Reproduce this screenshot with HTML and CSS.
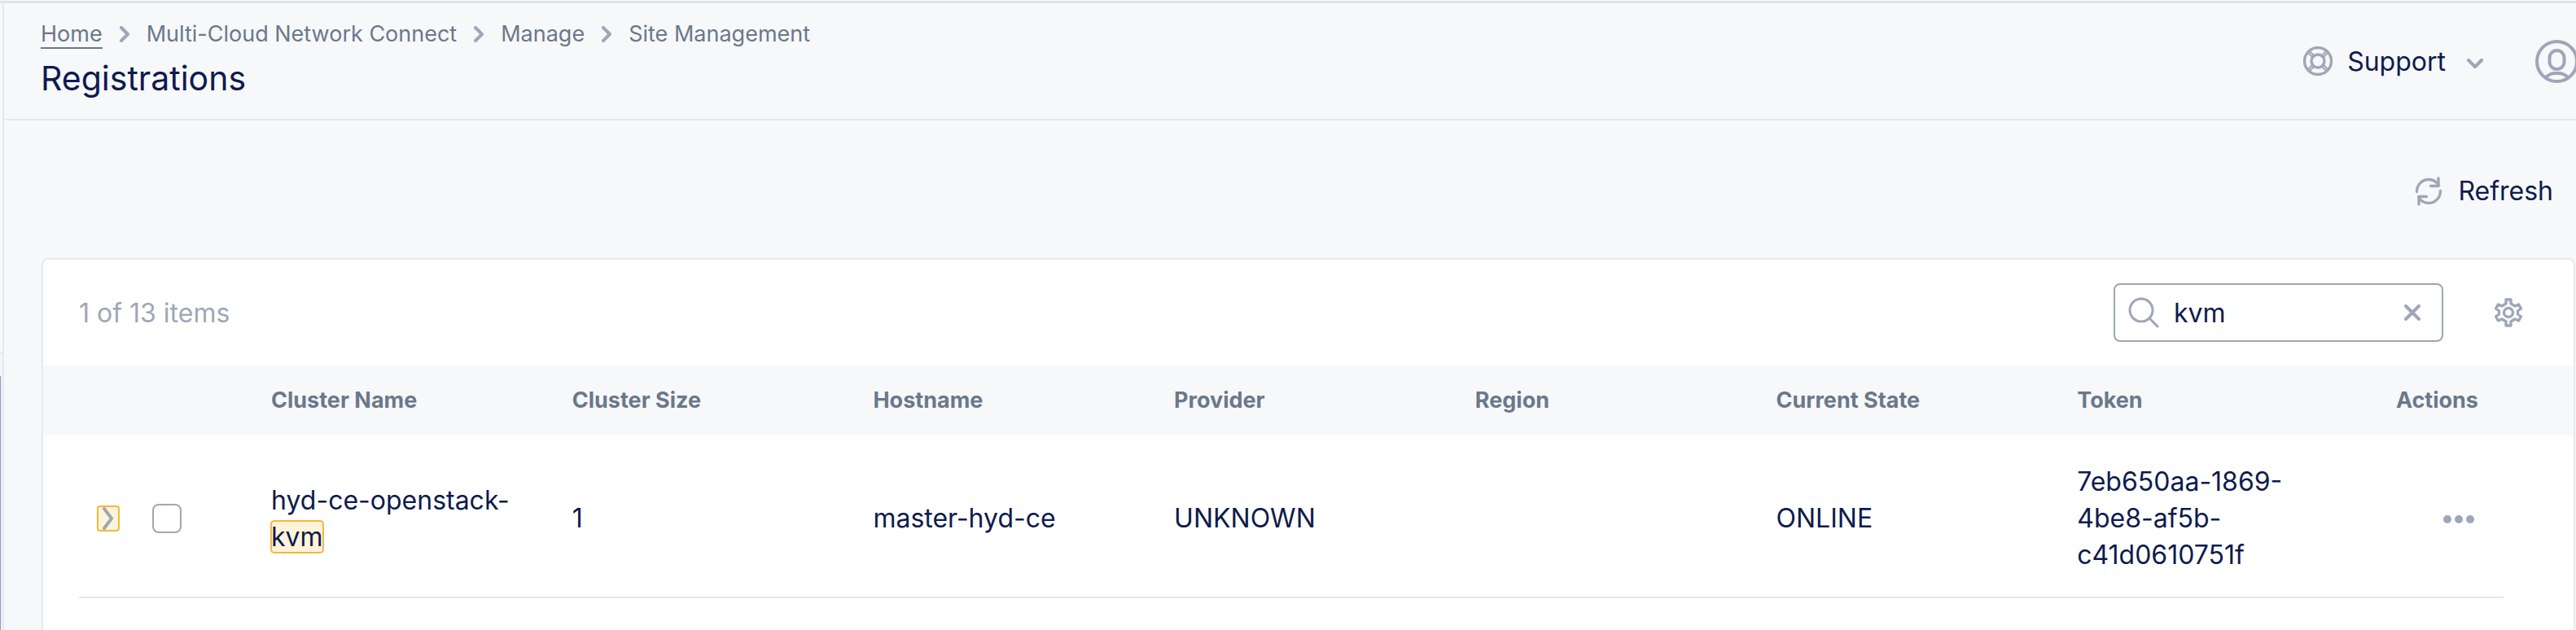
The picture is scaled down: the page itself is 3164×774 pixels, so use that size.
FILE: index.html
```html
<!DOCTYPE html>
<html lang="en">
<head>
<meta charset="utf-8">
<title>Registrations</title>
<link rel="stylesheet" href="styles.css">
</head>
<body>
<div class="shell">
  <aside class="sidebar" aria-label="Navigation edge"><div class="sidebar-top"></div><div class="sidebar-active"></div><div class="sidebar-scroll"></div></aside>
  <main class="main">
    <header class="header">
      <div class="heading">
        <nav class="breadcrumb" aria-label="Breadcrumb">
          <a class="crumb crumb-link" href="#">Home</a>
          <svg class="crumb-sep" viewBox="0 0 12 20"><path d="M2 2l8 8-8 8"/></svg>
          <span class="crumb">Multi-Cloud Network Connect</span>
          <svg class="crumb-sep" viewBox="0 0 12 20"><path d="M2 2l8 8-8 8"/></svg>
          <span class="crumb">Manage</span>
          <svg class="crumb-sep" viewBox="0 0 12 20"><path d="M2 2l8 8-8 8"/></svg>
          <span class="crumb">Site Management</span>
        </nav>
        <h1 class="title">Registrations</h1>
      </div>
      <div class="header-actions">
        <button class="support" type="button">
          <svg class="icon-36" viewBox="0 0 36 36"><circle cx="18" cy="18" r="16.500" stroke-width="3.400"/><circle cx="18" cy="18" r="8" stroke-width="3.400"/><path stroke-linecap="butt" d="M8 6l6 6M6 8l6 6M28 6l-6 6M30 8l-6 6M8 30l6-6M6 28l6-6M28 30l-6-6M30 28l-6-6" stroke-width="2"/></svg>
          <span>Support</span>
          <svg class="chevron-down" viewBox="0 0 20 12"><path d="M2 2l8 8 8-8"/></svg>
        </button>
        <button class="avatar" type="button" aria-label="Account">
          <svg class="avatar-icon" viewBox="0 0 53 53"><circle cx="26.500" cy="26.500" r="24.500"/><rect x="17.500" y="13" width="18" height="23" rx="9"/><path d="M13 46c3-3 7-5 11-5h5c4 0 8 2 11 5"/></svg>
        </button>
      </div>
    </header>

    <div class="page-tools">
      <button class="refresh" type="button">
        <svg class="icon-36" viewBox="0 0 36 36"><path stroke-width="3.400" d="M3.500 18.500C3.500 9.500 10.500 3.500 18 3.500c5 0 10 3 12.500 7.500M30 2v9.500H20.500M32.500 17.500c0 9-7 15-14.500 15-5 0-10-3-12.500-7.500M6 34v-9.500h9.500"/></svg>
        <span>Refresh</span>
      </button>
    </div>

    <section class="card">
      <div class="toolbar">
        <span class="count">1 of 13 items</span>
        <div class="toolbar-right">
          <div class="search">
            <svg class="search-icon" viewBox="0 0 38 38"><circle cx="16" cy="16" r="14"/><path d="M26 26l10 10"/></svg>
            <input class="search-input" type="text" value="kvm" aria-label="Search">
            <button class="icon-button" type="button" aria-label="Clear search"><svg class="clear-icon" viewBox="0 0 20 20"><path d="M2 2l16 16M18 2L2 18"/></svg></button>
          </div>
          <button class="icon-button" type="button" aria-label="Table settings">
            <svg class="icon-36" viewBox="0 0 36 36"><g stroke-width="3.400"><path d="M15 2h6v5l5 3 4.500-2 3 5-4 3v4l4 3-3 5-4.500-2-5 3v5h-6v-5l-5-3-4.500 2-3-5 4-3v-4l-4-3 3-5 4.500 2 5-3z"/><circle cx="18" cy="18" r="5.500"/></g></svg>
          </button>
        </div>
      </div>

      <table class="table">
        <colgroup>
          <col class="col-edge-left"><col class="col-select"><col><col><col><col><col><col><col><col class="col-actions"><col class="col-edge-right">
        </colgroup>
        <thead>
          <tr>
            <th></th><th></th>
            <th scope="col">Cluster Name</th>
            <th scope="col">Cluster Size</th>
            <th scope="col">Hostname</th>
            <th scope="col">Provider</th>
            <th scope="col">Region</th>
            <th scope="col">Current State</th>
            <th scope="col">Token</th>
            <th class="cell-actions" scope="col">Actions</th>
            <th></th>
          </tr>
        </thead>
        <tbody>
          <tr>
            <td class="edge"></td>
            <td class="cell-select">
              <div class="select-tools">
                <button class="expand" type="button" aria-label="Expand row"><svg class="expand-icon" viewBox="0 0 14 28"><path d="M2 2l9 12-9 12"/></svg></button>
                <input class="checkbox" type="checkbox" aria-label="Select hyd-ce-openstack-kvm">
              </div>
            </td>
            <td>hyd-ce-openstack-<wbr><mark class="match">kvm</mark></td>
            <td>1</td>
            <td>master-hyd-ce</td>
            <td>UNKNOWN</td>
            <td></td>
            <td>ONLINE</td>
            <td>7eb650aa-1869-<wbr>4be8-af5b-<wbr>c41d0610751f</td>
            <td class="cell-actions">
              <button class="more" type="button" aria-label="Row actions"><svg class="more-icon" viewBox="0 0 38 10"><circle cx="5" cy="5" r="5"/><circle cx="19" cy="5" r="5"/><circle cx="33" cy="5" r="5"/></svg></button>
            </td>
            <td class="edge"></td>
          </tr>
        </tbody>
      </table>
    </section>
  </main>
</div>
</body>
</html>
```
FILE: styles.css
```css
:root {
  --ink: #0e1b4d;
  --muted: #6b788a;
  --soft: #9fa6b8;
  --line: #e6e8f1;
  --surface: #f7f8fa;
}

* { box-sizing: border-box; }

body {
  margin: 0;
  overflow: hidden;
  background: var(--surface);
  color: var(--ink);
  font: 400 32px/45px Inter, "Liberation Sans", sans-serif;
}

button {
  margin: 0;
  padding: 0;
  border: 0;
  background: none;
  color: inherit;
  font: inherit;
  cursor: pointer;
}

svg {
  display: block;
  flex: none;
  fill: none;
  stroke: var(--soft);
  stroke-width: 4;
  stroke-linecap: round;
  stroke-linejoin: round;
}

.shell {
  display: flex;
  min-height: 100vh;
  padding-top: 1px;
}

.sidebar {
  display: flex;
  flex-direction: column;
  width: 5px;
  border-right: 2px solid var(--line);
  border-top: 3px solid #e0e3e2;
}

.sidebar-top { flex: 0 0 428px; }
.sidebar-active {
  flex: 0 0 30px;
  border-top: 2px solid var(--line);
  background: #f3f3f9;
}
.sidebar-scroll {
  flex: 1;
  border-left: 1px solid #9698b0;
  background: #f3f3f9;
}

.main {
  display: flex;
  flex: 1;
  flex-direction: column;
  min-width: 0;
  border-top: 3px solid #e0e3e2;
}

.header {
  display: flex;
  justify-content: space-between;
  align-items: center;
  height: 144px;
  padding-left: 45px;
  border-bottom: 2px solid var(--line);
}

.heading { padding-bottom: 4px; }

.breadcrumb {
  display: flex;
  align-items: center;
  gap: 21px;
  color: var(--muted);
  font-size: 27px;
  line-height: 32px;
}

.crumb-link {
  box-shadow: 0 2px 0 currentColor;
  color: inherit;
  text-decoration: none;
}

.crumb-sep { width: 12px; height: 20px; }

.title {
  margin: 14px 0 0;
  font-size: 41px;
  font-weight: 400;
  line-height: 48px;
}

.header-actions {
  display: flex;
  align-items: center;
  gap: 64px;
}

.support {
  display: flex;
  align-items: center;
  gap: 18px;
}

.icon-36 { width: 36px; height: 36px; }

.chevron-down {
  width: 20px;
  height: 12px;
  margin: 6px 0 0 8px;
}

.avatar {
  width: 50px;
  overflow: hidden;
}

.avatar-icon { width: 53px; height: 53px; }

.page-tools {
  display: flex;
  justify-content: flex-end;
  padding: 64px 28px 60px;
}

.refresh {
  display: flex;
  align-items: center;
  gap: 18px;
}

.card {
  flex: 1;
  margin: 0 1px 0 46px;
  border: 2px solid var(--line);
  border-bottom: 0;
  border-radius: 8px 8px 0 0;
  background: #fff;
}

.toolbar {
  display: flex;
  justify-content: space-between;
  align-items: center;
  height: 130px;
  padding: 0 62px 0 44px;
}

.count { color: var(--soft); }

.toolbar-right {
  display: flex;
  align-items: center;
  gap: 62px;
}

.search {
  display: flex;
  align-items: center;
  gap: 18px;
  width: 405px;
  height: 72px;
  padding: 0 26px 0 16px;
  border: 2px solid #9ca7b3;
  border-radius: 8px;
}

.search-icon { width: 38px; height: 38px; stroke-width: 3; }

.search-input {
  flex: 1;
  min-width: 0;
  padding: 0;
  border: 0;
  outline: 0;
  background: none;
  color: var(--ink);
  font: inherit;
}

.clear-icon { width: 20px; height: 20px; }

.table {
  width: 100%;
  border-spacing: 0;
  table-layout: fixed;
}

.col-edge-left { width: 44px; }
.col-select { width: 220px; }
.col-actions { width: 171px; }
.col-edge-right { width: 85px; }

th {
  height: 86px;
  padding: 0 16px;
  background: var(--surface);
  color: var(--muted);
  font-size: 27px;
  font-weight: 700;
  line-height: 36px;
  text-align: left;
}

td {
  padding: 34px 52px 29px 16px;
  border-bottom: 2px solid var(--line);
  vertical-align: middle;
}

td.edge { padding: 0; border-bottom: 0; }

.cell-actions { padding-right: 32px; padding-left: 0; text-align: right; }

.cell-select { padding-left: 22px; }

.select-tools {
  display: flex;
  align-items: center;
  gap: 40px;
}

.expand {
  padding: 0 5px;
  border: 2px solid #f5b83d;
  border-radius: 4px;
  background: #fff4d9;
}

.expand-icon { width: 14px; height: 28px; }

.checkbox {
  width: 36px;
  height: 36px;
  margin: 0;
  border: 2px solid var(--soft);
  border-radius: 8px;
  background: #fff;
  appearance: none;
}

.match {
  border-radius: 4px;
  outline: 2px solid #f5b83d;
  outline-offset: -1px;
  background: #fff4d9;
  color: inherit;
}

.more {
  display: inline-flex;
  justify-content: center;
  align-items: center;
  width: 48px;
  height: 45px;
  vertical-align: middle;
}

.more-icon { width: 38px; height: 10px; fill: var(--soft); stroke: none; }
```
